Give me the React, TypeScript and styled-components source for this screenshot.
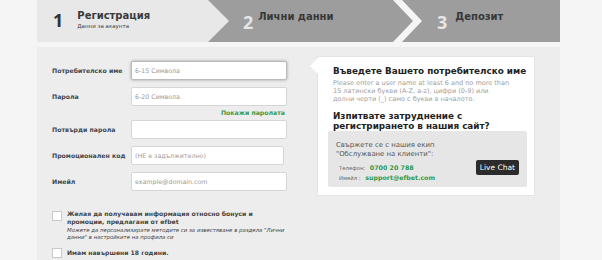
import { FC } from 'react';
import styled, { createGlobalStyle } from 'styled-components';

const GlobalStyle = createGlobalStyle`
  body {
    margin: 0;
    background: #f5f5f5;
    font-family: 'DejaVu Sans', Verdana, sans-serif;
  }
`;

const STEPS = [
  { num: '1', title: 'Регистрация', sub: 'Данни за акаунта' },
  { num: '2', title: 'Лични данни' },
  { num: '3', title: 'Депозит' },
];

const FIELDS = [
  { label: 'Потребителско име', placeholder: '6-15 Символа', focused: true },
  { label: 'Парола', placeholder: '6-20 Символа', showPw: true },
  { label: 'Потвърди парола', placeholder: '' },
  { label: 'Промоционален код', placeholder: '(НЕ е задължително)', narrow: true },
  { label: 'Имейл', placeholder: 'example@domain.com' },
];

const App: FC = () => {
  return (
    <Page>
      <GlobalStyle />
      <Steps>
        {STEPS.map((s, i) => (
          <Step key={s.num} $index={i}>
            <StepNum $active={i === 0}>{s.num}</StepNum>
            <StepText>
              <StepTitle $active={i === 0}>{s.title}</StepTitle>
              {s.sub && <StepSub>{s.sub}</StepSub>}
            </StepText>
          </Step>
        ))}
      </Steps>
      <Content>
        <FormCol>
          {FIELDS.map((f) => (
            <div key={f.label}>
              <FieldRow>
                <Label>{f.label}</Label>
                <Input
                  placeholder={f.placeholder}
                  $focused={f.focused}
                  $narrow={f.narrow}
                  readOnly
                />
              </FieldRow>
              {f.showPw && <ShowPw>Покажи паролата</ShowPw>}
            </div>
          ))}
          <Checks>
            <CheckRow>
              <Box />
              <div>
                <CheckText>
                  Желая да получавам информация относно бонуси и промоции,
                  предлагани от efbet
                </CheckText>
                <CheckNote>
                  Можете да персонализирате методите си за известяване в
                  раздела "Лични данни" в настройките на профила си
                </CheckNote>
              </div>
            </CheckRow>
            <CheckRow $center>
              <Box />
              <CheckText>Имам навършени 18 години.</CheckText>
            </CheckRow>
          </Checks>
        </FormCol>
        <Panel>
          <PanelTitle>Въведете Вашето потребителско име</PanelTitle>
          <PanelText>
            Please enter a user name at least 6 and no more than
            <br />
            15 латински букви (A-Z, a-z), цифри (0-9) или
            <br />
            долни черти (_) само с букви в началото.
          </PanelText>
          <PanelTitle>
            Изпитвате затруднение с<br />
            регистрирането в нашия сайт?
          </PanelTitle>
          <Support>
            <div>
              <SupportText>
                Свържете се с нашия екип
                <br />
                "Обслужване на клиенти":
              </SupportText>
              <ContactLine>
                Телефон: <Green>0700 20 788</Green>
              </ContactLine>
              <ContactLine>
                Имейл : <Green>support@efbet.com</Green>
              </ContactLine>
            </div>
            <ChatButton>Live Chat</ChatButton>
          </Support>
        </Panel>
      </Content>
    </Page>
  );
};

export default App;

const Page = styled.div`
  width: 523px;
  padding-left: 37px;
`;

const Steps = styled.div`
  display: flex;
  height: 42px;
`;

const stepShapes = [
  { width: 192, ml: 0, bg: '#e8e8e8', clip: 'polygon(0 0, 171px 0, 100% 50%, 171px 100%, 0 100%)', pl: 16, gap: 14 },
  { width: 205, ml: -21, bg: '#9d9d9d', clip: 'polygon(0 0, 185px 0, 100% 50%, 185px 100%, 0 100%, 21px 50%)', pl: 35, gap: 5 },
  { width: 158, ml: -11, bg: '#9d9d9d', clip: 'polygon(0 0, 100% 0, 100% 100%, 0 100%, 20px 50%)', pl: 35, gap: 8 },
];

const Step = styled.div<{ $index: number }>`
  display: flex;
  align-items: flex-start;
  gap: ${(p) => stepShapes[p.$index].gap}px;
  box-sizing: border-box;
  flex: none;
  width: ${(p) => stepShapes[p.$index].width}px;
  margin-left: ${(p) => stepShapes[p.$index].ml}px;
  padding: 10px 0 0 ${(p) => stepShapes[p.$index].pl}px;
  background: ${(p) => stepShapes[p.$index].bg};
  clip-path: ${(p) => stepShapes[p.$index].clip};
`;

const StepNum = styled.div<{ $active?: boolean }>`
  font-family: 'Open Sans', sans-serif;
  font-weight: 700;
  font-size: 18px;
  line-height: 22px;
  margin-top: ${(p) => (p.$active ? -1 : 1)}px;
  color: ${(p) => (p.$active ? '#333' : '#e6e6e6')};
`;

const StepText = styled.div<{ $sub?: boolean }>`
  display: flex;
  flex-direction: column;
`;

const StepTitle = styled.div<{ $active?: boolean }>`
  font-family: 'DejaVu Sans', sans-serif;
  font-weight: 700;
  font-size: 10px;
  line-height: 12px;
  margin-top: ${(p) => (p.$active ? 0 : 1)}px;
  color: ${(p) => (p.$active ? '#3a3a3a' : '#383838')};
`;

const StepSub = styled.div`
  font-size: 5.5px;
  color: #444;
  line-height: 7px;
  margin-top: 1px;
`;

const Content = styled.div`
  display: flex;
  align-items: flex-start;
  gap: 30px;
  margin-top: 5px;
  padding: 14px 25px 0 15px;
  height: 213px;
  overflow: hidden;
  box-sizing: border-box;
  background: #ededed;
`;

const FormCol = styled.div`
  width: 235px;
  flex: none;
`;

const FieldRow = styled.div`
  display: flex;
  align-items: center;
  margin-bottom: 7px;
`;

const Label = styled.div`
  width: 79px;
  flex: none;
  white-space: nowrap;
  font-size: 6.2px;
  font-weight: 700;
  color: #3e4852;
`;

const Input = styled.input<{ $focused?: boolean; $narrow?: boolean }>`
  box-sizing: border-box;
  width: ${(p) => (p.$narrow ? 153 : 156)}px;
  height: 19px;
  padding: 0 3px;
  border: 1px solid ${(p) => (p.$focused ? '#bbb' : '#d6d6d6')};
  border-radius: 2px;
  background: #fff;
  font-family: 'DejaVu Sans', sans-serif;
  font-size: 6.3px;
  outline: none;
  box-shadow: ${(p) => (p.$focused ? '0 0 3px rgba(0,0,0,0.35)' : 'none')};
  &::placeholder {
    color: #9a9a9a;
  }
`;

const ShowPw = styled.div`
  text-align: right;
  margin: -5px 0 2px;
  padding-right: 2px;
  font-size: 6.2px;
  font-weight: 700;
  color: #3d9a50;
  line-height: 10px;
`;

const Checks = styled.div`
  margin-top: 19px;
  display: flex;
  flex-direction: column;
  gap: 6px;
`;

const CheckRow = styled.div<{ $center?: boolean }>`
  display: flex;
  align-items: ${(p) => (p.$center ? 'center' : 'flex-start')};
  gap: 5px;
`;

const Box = styled.div`
  width: 10px;
  height: 10px;
  flex: none;
  background: #fff;
  border: 1px solid #c8c8c8;
  box-sizing: border-box;
  margin-top: 1px;
`;

const CheckText = styled.div`
  max-width: 200px;
  font-size: 6.1px;
  font-weight: 700;
  line-height: 8px;
  color: #444;
`;

const CheckNote = styled.div`
  width: 225px;
  font-size: 5.4px;
  font-style: italic;
  line-height: 7px;
  color: #444;
  margin-top: 1px;
`;

const Panel = styled.div`
  position: relative;
  flex: none;
  width: 218px;
  height: 140px;
  margin-top: -5px;
  box-sizing: border-box;
  padding: 9px 9px 0 15px;
  background: #fff;
  border: 1px solid #e4e4e4;
  &::before {
    content: '';
    position: absolute;
    left: -8px;
    top: 1px;
    border-style: solid;
    border-width: 8px 8px 8px 0;
    border-color: transparent #fff transparent transparent;
  }
`;

const PanelTitle = styled.div`
  font-family: 'DejaVu Sans', sans-serif;
  font-weight: 700;
  font-size: 8.8px;
  line-height: 10px;
  white-space: nowrap;
  color: #222;
`;

const PanelText = styled.div`
  font-family: 'DejaVu Sans', sans-serif;
  font-size: 6.5px;
  line-height: 8px;
  white-space: nowrap;
  color: #a0a0a0;
  margin: 3px 0 8px;
`;

const Support = styled.div`
  display: flex;
  align-items: flex-start;
  justify-content: space-between;
  margin: 0 0 0 -5px;
  width: 199px;
  height: 56px;
  box-sizing: border-box;
  padding: 10px 8px 0 8px;
  background: #e6e6e6;
  border-radius: 2px;
`;

const SupportText = styled.div`
  font-size: 6.9px;
  line-height: 9px;
  color: #555;
  margin-bottom: 4px;
`;

const ContactLine = styled.div`
  font-size: 5.3px;
  line-height: 10px;
  color: #666;
  padding-left: 3px;
`;

const Green = styled.span`
  font-size: 6.3px;
  font-weight: 700;
  color: #2e9a4e;
  margin-left: 3px;
`;

const ChatButton = styled.div`
  background: #2b2b2b;
  color: #fff;
  font-family: 'DejaVu Sans', sans-serif;
  font-size: 7.5px;
  line-height: 15px;
  padding: 0 4px;
  border-radius: 2px;
  margin-top: 19px;
`;
